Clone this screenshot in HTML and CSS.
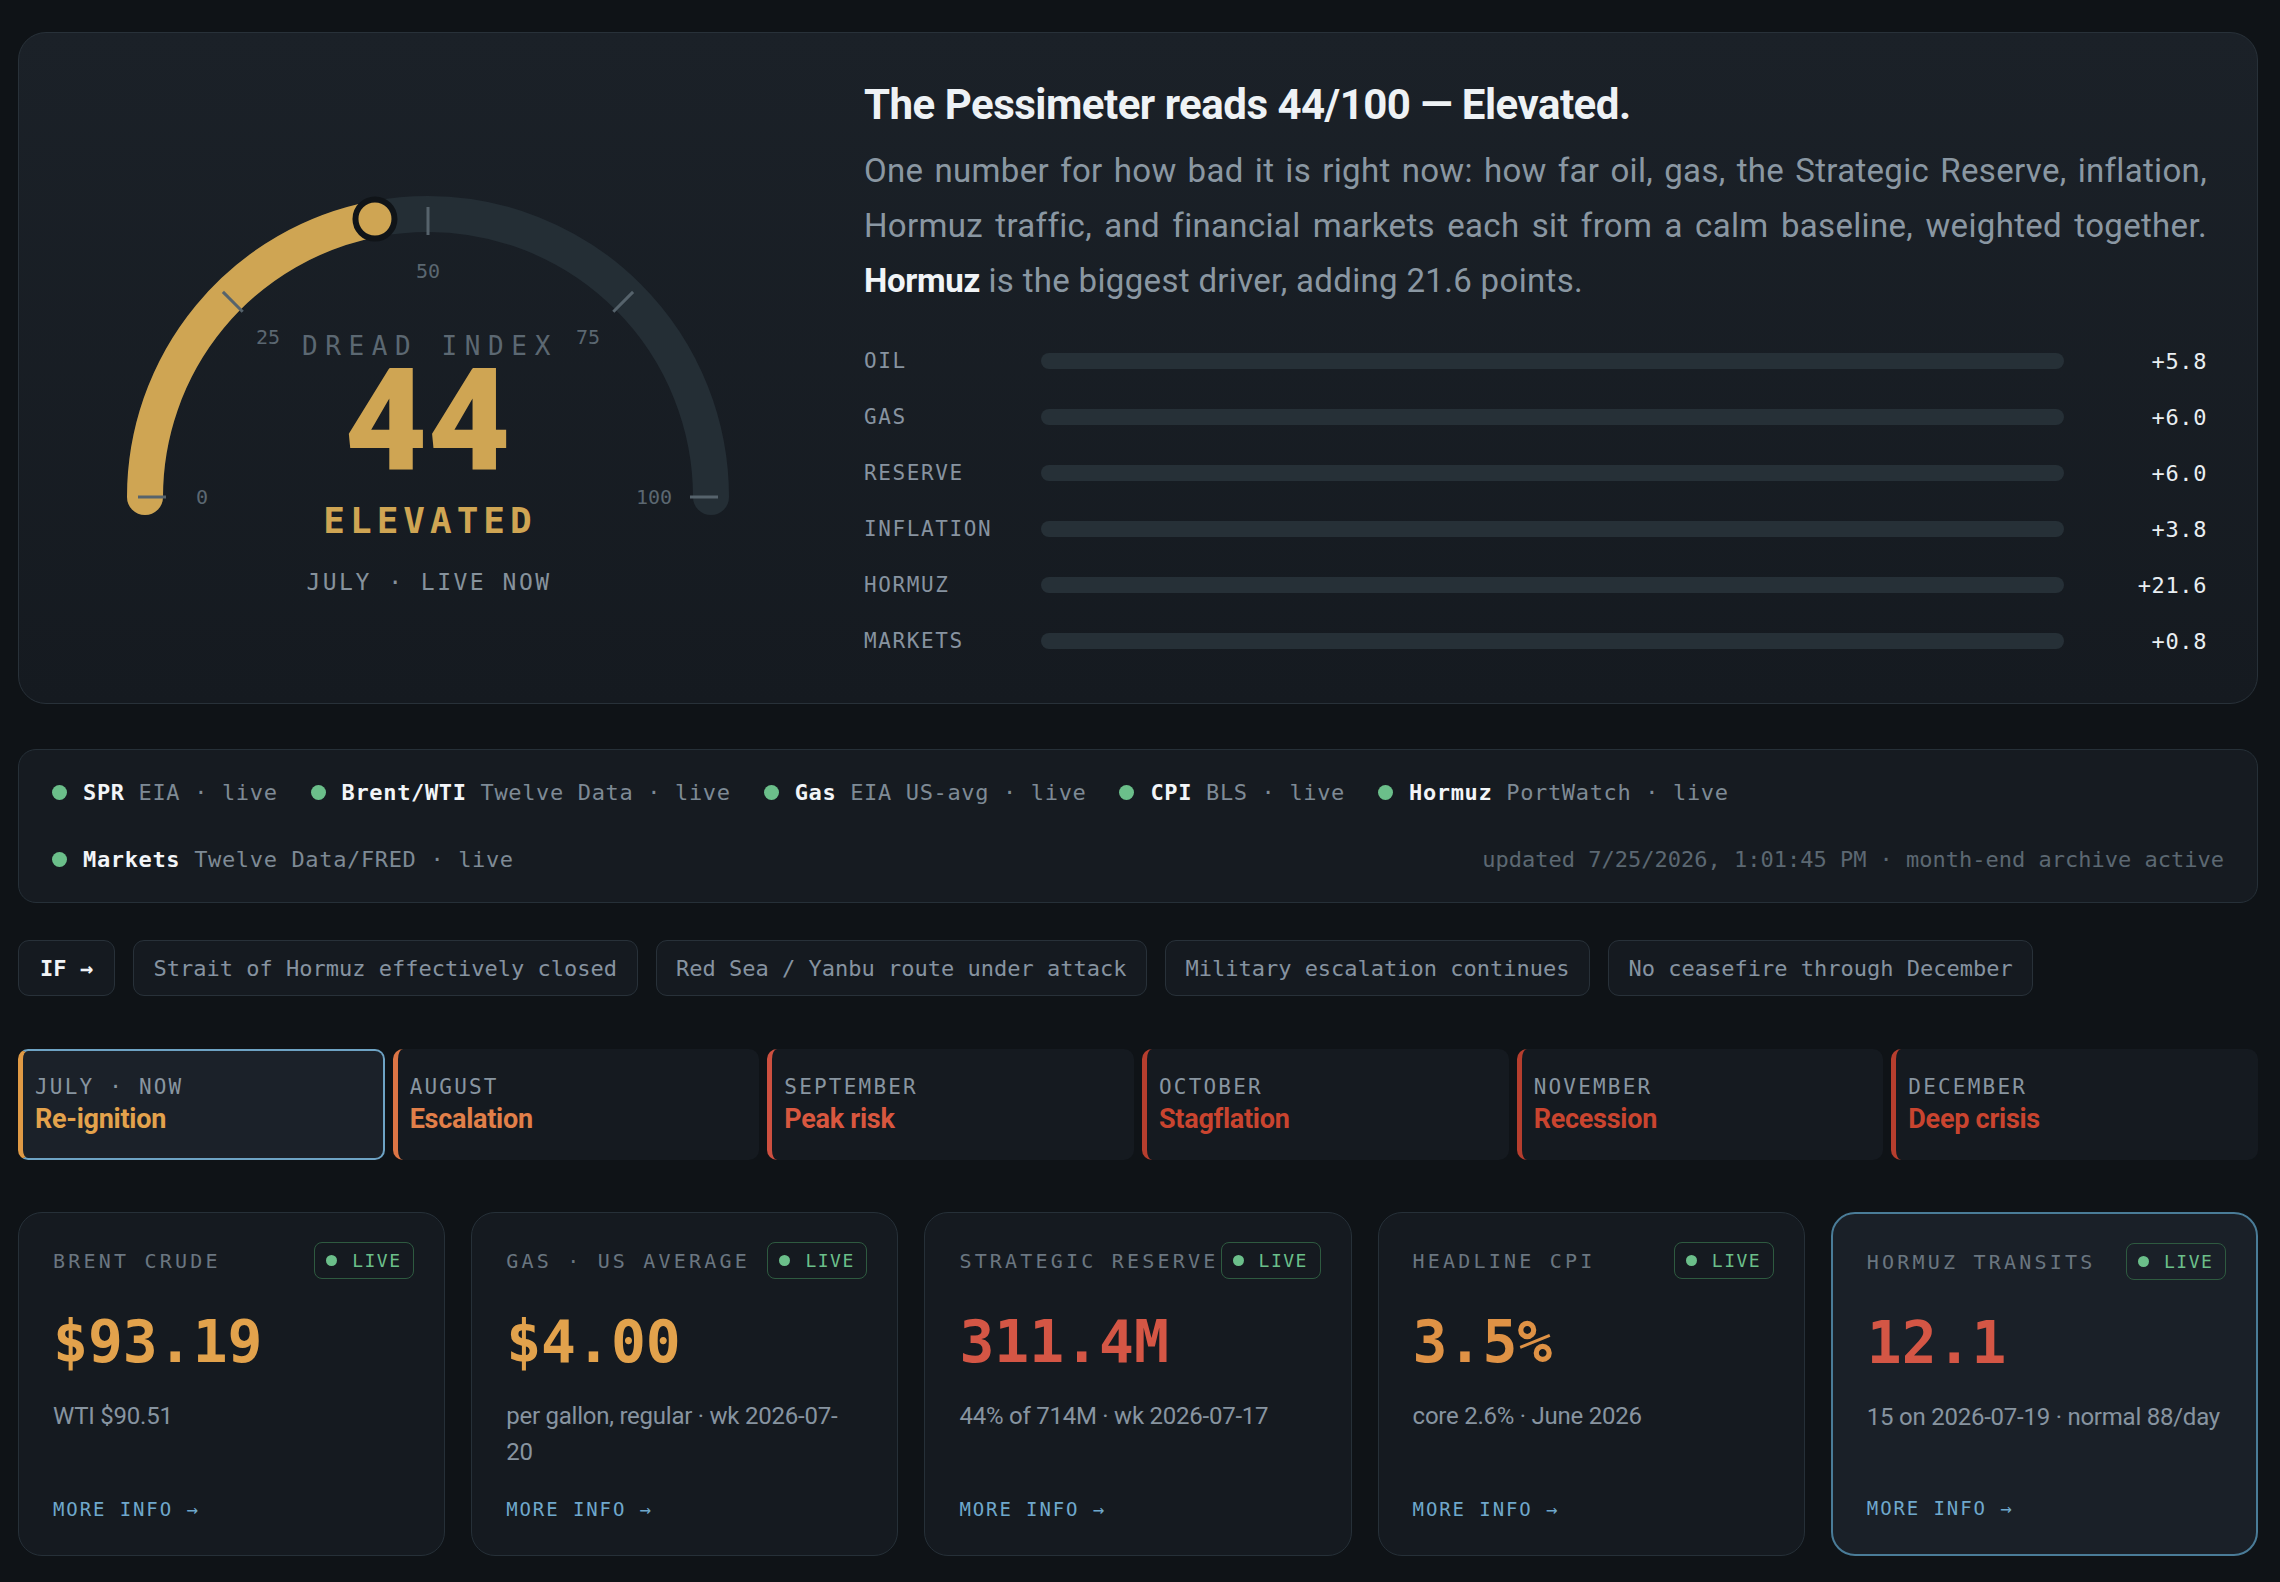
FILE: index.html
```html
<!DOCTYPE html>
<html lang="en">
<head>
  <meta charset="utf-8">
  <title>The Pessimeter</title>
  <link rel="stylesheet" href="styles.css">
</head>
<body>
<div class="page">

  <!-- HERO: gauge + breakdown -->
  <section class="hero">
    <div class="gauge">
      <svg width="660" height="480" viewBox="0 0 660 480">
        <path class="track" d="M 47 370 A 283 283 0 0 1 613 370"/>
        <path class="fill" d="M 47 370 A 283 283 0 0 1 276.97 92.01"/>
        <g class="ticks">
          <line x1="40" y1="370" x2="68" y2="370"/>
          <line x1="124.9" y1="164.9" x2="144.7" y2="184.7"/>
          <line x1="330" y1="80" x2="330" y2="108"/>
          <line x1="535.1" y1="164.9" x2="515.3" y2="184.7"/>
          <line x1="592" y1="370" x2="620" y2="370"/>
        </g>
        <g class="tick-labels">
          <text x="104" y="370">0</text>
          <text x="170" y="210">25</text>
          <text x="330" y="144">50</text>
          <text x="490" y="210">75</text>
          <text x="556" y="370">100</text>
        </g>
        <circle class="knob" cx="276.97" cy="92.01" r="19.5"/>
        <text class="g-title" x="332" y="228">DREAD INDEX</text>
        <text class="g-value" x="330" y="343">44</text>
        <text class="g-level" x="332" y="406">ELEVATED</text>
        <text class="g-when" x="331" y="463">JULY · LIVE NOW</text>
      </svg>
    </div>

    <div class="summary">
      <h1>The Pessimeter reads 44/100 — Elevated.</h1>
      <p class="lede">One number for how bad it is right now: how far oil, gas, the Strategic Reserve, inflation, Hormuz traffic, and financial markets each sit from a calm baseline, weighted together. <strong>Hormuz</strong> is the biggest driver, adding 21.6 points.</p>
      <div class="drivers">
        <span class="d-name">OIL</span><span class="d-bar"></span><span class="d-val">+5.8</span>
        <span class="d-name">GAS</span><span class="d-bar"></span><span class="d-val">+6.0</span>
        <span class="d-name">RESERVE</span><span class="d-bar"></span><span class="d-val">+6.0</span>
        <span class="d-name">INFLATION</span><span class="d-bar"></span><span class="d-val">+3.8</span>
        <span class="d-name">HORMUZ</span><span class="d-bar"></span><span class="d-val">+21.6</span>
        <span class="d-name">MARKETS</span><span class="d-bar"></span><span class="d-val">+0.8</span>
      </div>
    </div>
  </section>

  <!-- DATA SOURCES -->
  <section class="sources">
    <div class="src-row">
      <span class="src"><i class="dot"></i><b>SPR</b> EIA · live</span>
      <span class="src"><i class="dot"></i><b>Brent/WTI</b> Twelve Data · live</span>
      <span class="src"><i class="dot"></i><b>Gas</b> EIA US-avg · live</span>
      <span class="src"><i class="dot"></i><b>CPI</b> BLS · live</span>
      <span class="src"><i class="dot"></i><b>Hormuz</b> PortWatch · live</span>
    </div>
    <div class="src-row">
      <span class="src"><i class="dot"></i><b>Markets</b> Twelve Data/FRED · live</span>
      <span class="stamp">updated 7/25/2026, 1:01:45 PM · month-end archive active</span>
    </div>
  </section>

  <!-- SCENARIO ASSUMPTIONS -->
  <div class="ifs">
    <span class="chip chip-if">IF →</span>
    <span class="chip">Strait of Hormuz effectively closed</span>
    <span class="chip">Red Sea / Yanbu route under attack</span>
    <span class="chip">Military escalation continues</span>
    <span class="chip">No ceasefire through December</span>
  </div>

  <!-- MONTH TIMELINE -->
  <div class="months">
    <div class="month m-jul active"><span class="m-label">JULY · NOW</span><span class="m-title">Re-ignition</span></div>
    <div class="month m-aug"><span class="m-label">AUGUST</span><span class="m-title">Escalation</span></div>
    <div class="month m-sep"><span class="m-label">SEPTEMBER</span><span class="m-title">Peak risk</span></div>
    <div class="month m-late"><span class="m-label">OCTOBER</span><span class="m-title">Stagflation</span></div>
    <div class="month m-late"><span class="m-label">NOVEMBER</span><span class="m-title">Recession</span></div>
    <div class="month m-late"><span class="m-label">DECEMBER</span><span class="m-title">Deep crisis</span></div>
  </div>

  <!-- KPI CARDS -->
  <div class="kpis">
    <div class="kpi">
      <div class="k-head"><span class="k-label">BRENT CRUDE</span><span class="live"><i></i>LIVE</span></div>
      <div class="k-value amber">$93.19</div>
      <div class="k-sub">WTI $90.51</div>
      <a class="k-more">MORE INFO →</a>
    </div>
    <div class="kpi">
      <div class="k-head"><span class="k-label">GAS · US AVERAGE</span><span class="live"><i></i>LIVE</span></div>
      <div class="k-value amber">$4.00</div>
      <div class="k-sub">per gallon, regular · wk 2026-07-<br>20</div>
      <a class="k-more">MORE INFO →</a>
    </div>
    <div class="kpi">
      <div class="k-head"><span class="k-label">STRATEGIC RESERVE</span><span class="live"><i></i>LIVE</span></div>
      <div class="k-value red">311.4M</div>
      <div class="k-sub">44% of 714M · wk 2026-07-17</div>
      <a class="k-more">MORE INFO →</a>
    </div>
    <div class="kpi">
      <div class="k-head"><span class="k-label">HEADLINE CPI</span><span class="live"><i></i>LIVE</span></div>
      <div class="k-value orange">3.5%</div>
      <div class="k-sub">core 2.6% · June 2026</div>
      <a class="k-more">MORE INFO →</a>
    </div>
    <div class="kpi focus">
      <div class="k-head"><span class="k-label">HORMUZ TRANSITS</span><span class="live"><i></i>LIVE</span></div>
      <div class="k-value red">12.1</div>
      <div class="k-sub">15 on 2026-07-19 · normal 88/day</div>
      <a class="k-more">MORE INFO →</a>
    </div>
  </div>

  <section class="next"></section>
</div>
</body>
</html>
```

FILE: styles.css
```css
/* --- Base --- */
*{box-sizing:border-box}
html,body{margin:0;background:#0f1317}
body{font-family:Roboto,"Noto Sans",sans-serif;color:#e8edf1;overflow:hidden}
.page{width:2240px;margin-left:18px;padding-top:32px}

/* --- Hero --- */
.hero{display:grid;grid-template-columns:722px 1fr;column-gap:75px;height:672px;padding:47px 50px 33px 48px;border:1.5px solid #283139;border-radius:28px;background:linear-gradient(180deg,#1b2128,#151a20)}
.gauge{align-self:start;margin-top:47px;display:flex;justify-content:center}
.gauge svg{display:block;overflow:visible}
.track{fill:none;stroke:#242e35;stroke-width:36;stroke-linecap:round}
.fill{fill:none;stroke:#cfa553;stroke-width:36;stroke-linecap:round}
.ticks line{stroke:#56636c;stroke-width:3}
.tick-labels text{font-family:"DejaVu Sans Mono",monospace;font-size:20px;fill:#5b6771;text-anchor:middle;dominant-baseline:central}
.knob{fill:#cfa553;stroke:#101418;stroke-width:6}
.g-title{font-family:"DejaVu Sans Mono",monospace;font-size:26px;letter-spacing:7.6px;fill:#5c6872;text-anchor:middle}
.g-value{font-family:Roboto,sans-serif;font-weight:900;font-size:142px;letter-spacing:1px;fill:#cfa553;text-anchor:middle}
.g-level{font-family:"DejaVu Sans Mono",monospace;font-weight:700;font-size:36px;letter-spacing:5px;fill:#cfa553;text-anchor:middle}
.g-when{font-family:"DejaVu Sans Mono",monospace;font-size:23px;letter-spacing:2.5px;fill:#86929c;text-anchor:middle}

.summary h1{margin:0;font-size:42px;line-height:50px;font-weight:700;letter-spacing:-.012em;color:#eef2f5}
.lede{margin:13px 0 0;font-size:33px;line-height:55px;letter-spacing:.01em;color:#8a97a2;text-align:justify}
.lede strong{color:#f1f4f7;font-weight:700;letter-spacing:-.01em}
.drivers{margin-top:25px;display:grid;grid-template-columns:177px 1fr 143px;grid-auto-rows:56px;align-items:center}
.d-name{font-family:"DejaVu Sans Mono",monospace;font-size:21px;letter-spacing:1.6px;color:#8793a0}
.d-bar{height:16px;border-radius:8px;background:#263037}
.d-val{font-family:"DejaVu Sans Mono",monospace;font-size:22px;letter-spacing:.6px;color:#e9eef2;text-align:right}

/* --- Sources strip --- */
.sources{margin-top:45px;display:flex;flex-direction:column;row-gap:34px;padding:26px 33px;border:1.5px solid #263038;border-radius:18px;background:#161b21;font-family:"DejaVu Sans Mono",monospace;font-size:22px;line-height:33px;letter-spacing:.65px;color:#7e8a95}
.src-row{display:flex;align-items:center;column-gap:33px}
.src{display:flex;align-items:center;white-space:pre}
.src b{color:#f2f5f8}
.dot{width:15px;height:15px;border-radius:50%;background:#6bbf8a;margin-right:16px}
.stamp{margin-left:auto;letter-spacing:0;color:#5c6872}

/* --- IF chips --- */
.ifs{margin-top:37px;display:flex;gap:18px}
.chip{height:56px;display:flex;align-items:center;padding:0 19.5px;border:1.5px solid #283139;border-radius:11px;background:#151a20;font-family:"DejaVu Sans Mono",monospace;font-size:22px;color:#8693a0}
.chip-if{font-weight:700;color:#f1f4f7;padding:0 21px}

/* --- Months --- */
.months{margin-top:53px;display:grid;grid-template-columns:repeat(6,1fr);gap:8px}
.month{height:111px;display:flex;flex-direction:column;justify-content:center;gap:4px;padding-left:12px;border-radius:10px;background:#151a20;border-left:5px solid}
.m-label{font-family:"DejaVu Sans Mono",monospace;font-size:21px;letter-spacing:2.2px;color:#8895a0}
.m-title{font-size:27px;font-weight:700;letter-spacing:-.01em}
.m-jul{border-left-color:#e09a45}
.m-jul .m-title{color:#e3a24c}
.m-aug{border-left-color:#dc7545}
.m-aug .m-title{color:#e17f49}
.m-sep{border-left-color:#cd5040}
.m-sep .m-title{color:#d8573f}
.m-late{border-left-color:#b63e2e}
.m-late .m-title{color:#c9442f}
.month.active{background:#1b2129;border:2px solid #6ea3c4;border-left:5px solid #e09a45}

/* --- KPI cards --- */
.kpis{margin-top:52px;display:grid;grid-template-columns:repeat(5,1fr);gap:26px}
.kpi{height:344px;display:flex;flex-direction:column;padding:29px 30px 32px 34px;border:1.5px solid #263038;border-radius:24px;background:#151a20}
.kpi.focus{border:2px solid #4a7c98;background:#1a2028}
.k-head{display:flex;justify-content:space-between;align-items:center;height:37px}
.k-label{font-family:"DejaVu Sans Mono",monospace;font-size:20px;letter-spacing:3.2px;color:#6a7680;white-space:nowrap}
.live{flex:none;width:100px;height:37px;display:flex;align-items:center;gap:15px;padding-left:11px;border:1.5px solid #2e5a40;border-radius:8px;font-family:"DejaVu Sans Mono",monospace;font-size:18px;letter-spacing:1.5px;color:#6bbf8a}
.live i{width:11px;height:11px;border-radius:50%;background:#6bbf8a}
.k-value{margin-top:29px;font-family:"DejaVu Sans Mono",monospace;font-weight:700;font-size:58px;line-height:1.2}
.amber{color:#e2a24c}
.orange{color:#df9245}
.red{color:#d45645}
.k-sub{margin-top:20px;font-size:24px;line-height:36px;letter-spacing:-.01em;color:#8794a0}
.k-more{margin-top:auto;font-family:"DejaVu Sans Mono",monospace;font-size:19px;line-height:28px;letter-spacing:1.9px;color:#6fa8cc}

/* --- next panel (cut off) --- */
.next{margin-top:26px;height:200px;border:1.5px solid #263038;border-radius:24px;background:#151a20}
```
